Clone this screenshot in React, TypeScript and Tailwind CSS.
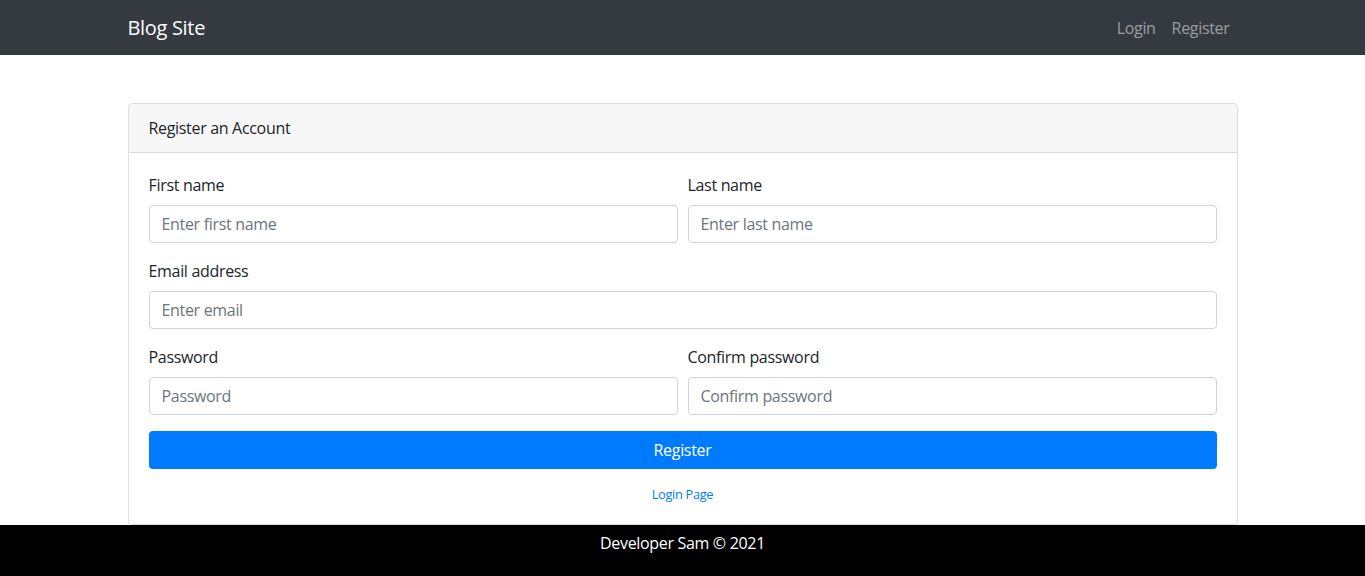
import React from 'react';

const font = { fontFamily: '"Open Sans", "Noto Sans", sans-serif' };

const Field: React.FC<{ label: string; placeholder: string; type?: string }> = ({ label, placeholder, type = 'text' }) => (
  <div className="flex-1 mb-4">
    <label className="block mb-2 text-base leading-6 text-[#212529]">{label}</label>
    <input
      type={type}
      placeholder={placeholder}
      className="block w-full h-[38px] px-3 py-1.5 text-base leading-6 text-[#495057] bg-white border border-[#ced4da] rounded placeholder:text-[#6c757d] outline-none"
    />
  </div>
);

const App: React.FC = () => {
  return (
    <div className="min-h-screen bg-white flex flex-col tracking-[-0.02em]" style={font}>
      {/* Navbar */}
      <nav className="bg-[#343a40] h-[55px] shrink-0">
        <div className="max-w-[1140px] mx-auto px-[15px] h-full flex items-center justify-between">
          <span className="text-white text-xl leading-[30px]">Blog Site</span>
          <div className="flex items-center">
            <a className="px-2 text-base text-white/50">Login</a>
            <a className="px-2 text-base text-white/50">Register</a>
          </div>
        </div>
      </nav>

      {/* Content */}
      <main className="flex-1">
        <div className="max-w-[1140px] mx-auto px-[15px] mt-12">
          <div className="border border-black/[0.125] rounded">
            <div className="bg-[#f7f7f7] border-b border-black/[0.125] px-5 py-3 text-base leading-6 text-[#212529] rounded-t">
              Register an Account
            </div>
            <div className="p-5">
              <div className="flex gap-[10px]">
                <Field label="First name" placeholder="Enter first name" />
                <Field label="Last name" placeholder="Enter last name" />
              </div>
              <Field label="Email address" placeholder="Enter email" type="email" />
              <div className="flex gap-[10px]">
                <Field label="Password" placeholder="Password" type="password" />
                <Field label="Confirm password" placeholder="Confirm password" type="password" />
              </div>
              <button className="w-full h-[38px] bg-[#007bff] text-white text-base leading-6 rounded">
                Register
              </button>
              <div className="mt-4 text-center text-[12.8px] leading-[19px]">
                <a className="text-[#007bff]">Login Page</a>
              </div>
            </div>
          </div>
        </div>
      </main>

      {/* Footer */}
      <footer className="bg-black text-white text-center text-base leading-6 pt-[6px] h-[51px] shrink-0">
        Developer Sam © 2021
      </footer>
    </div>
  );
};

export default App;
